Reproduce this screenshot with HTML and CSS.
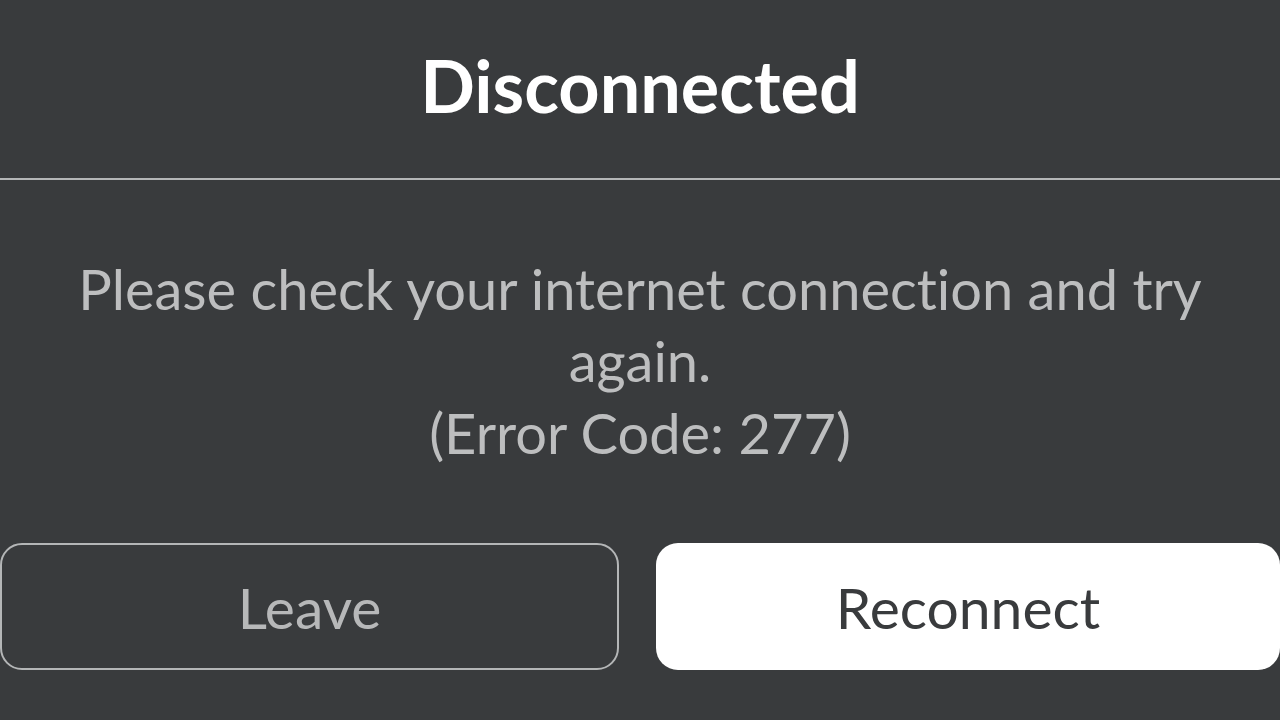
FILE: index.html
```html
<!DOCTYPE html>
<html lang="en">
<head>
<meta charset="utf-8">
<title>Disconnected</title>
<link rel="stylesheet" href="styles.css">
</head>
<body>
<div class="dialog">
  <header class="dialog-header">
    <h1 class="dialog-title">Disconnected</h1>
  </header>
  <div class="dialog-body">
    <p class="dialog-message">Please check your internet connection and try again.<br>(Error Code: 277)</p>
  </div>
  <div class="dialog-actions">
    <button class="btn btn-secondary" type="button">Leave</button>
    <button class="btn btn-primary" type="button">Reconnect</button>
  </div>
</div>
</body>
</html>
```
FILE: styles.css
```css
* { box-sizing: border-box; }
html, body {
  margin: 0;
  padding: 0;
  width: 1280px;
  height: 720px;
  overflow: hidden;
  background: #393b3d;
  font-family: "Lato", "Open Sans", sans-serif;
  font-variant-ligatures: none;
}
.dialog {
  display: flex;
  flex-direction: column;
  width: 1280px;
  height: 720px;
}
.dialog-header {
  height: 180px;
  display: flex;
  align-items: center;
  justify-content: center;
  padding-bottom: 8px;
  border-bottom: 2px solid #b4b6b7;
}
.dialog-title {
  margin: 0;
  color: #ffffff;
  font-size: 72px;
  font-weight: 700;
  line-height: 72px;
}
.dialog-body {
  padding: 73px 40px 0;
}
.dialog-message {
  margin: 0;
  color: #bdbebf;
  font-size: 56px;
  line-height: 72px;
  text-align: center;
}
.dialog-actions {
  display: flex;
  gap: 37px;
  margin-top: 74px;
}
.btn {
  height: 127px;
  border-radius: 22px;
  font-family: inherit;
  font-variant-ligatures: none;
  font-size: 57px;
  padding: 0;
  cursor: pointer;
}
.btn-secondary {
  width: 619px;
  background: transparent;
  border: 2px solid #b4b6b7;
  color: #b7b8b9;
}
.btn-primary {
  flex: 1;
  background: #ffffff;
  border: none;
  color: #393b3d;
}
```
